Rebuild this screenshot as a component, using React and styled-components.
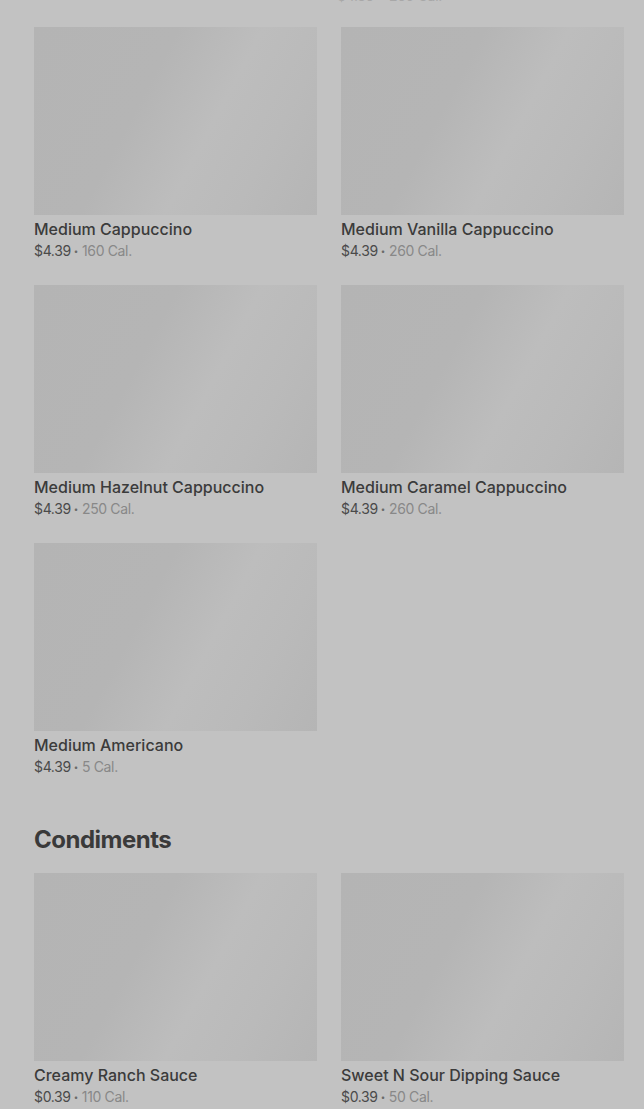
import React from 'react'
import styled, { createGlobalStyle } from 'styled-components'

const GlobalStyle = createGlobalStyle`
    html, body {
        margin: 0;
        padding: 0;
        background: #c2c2c2;
        font-family: Inter, "Noto Sans", sans-serif;
        overflow: hidden;
    }
`

const Page = styled.div`
    width: 644px;
    height: 1109px;
    overflow: hidden;
    background: #c2c2c2;
    padding-left: 34px;
    box-sizing: border-box;
    display: flow-root;
`

const Tail = styled.div`
    display: flow-root;
    height: 27px;
    padding-left: 303px;
`

const TailText = styled.div`
    margin-top: -14px;
    line-height: 20px;
    font-size: 14px;
    letter-spacing: -0.3px;
    color: #a8a8a8;
`

const Grid = styled.div`
    display: grid;
    grid-template-columns: repeat(2, 283px);
    column-gap: 24px;
    row-gap: 24px;
`

const Card = styled.div`
    display: flex;
    flex-direction: column;
`

const Photo = styled.div`
    height: 188px;
    background: linear-gradient(118deg, #b4b4b4 0%, #b5b5b5 38%, #bdbdbd 60%, #bababa 78%, #b5b5b5 100%);
`

const Title = styled.div`
    margin-top: 2px;
    line-height: 24px;
    font-size: 16px;
    font-weight: 500;
    color: #3b3b3b;
`

const Meta = styled.div`
    line-height: 20px;
    font-size: 14px;
    letter-spacing: -0.35px;
    color: #4a4a4a;
`

const Dot = styled.span`
    font-size: 8px;
    margin: 0 4px 0 3px;
    vertical-align: 2px;
    color: #6a6a6a;
`

const Cal = styled.span`
    color: #888888;
`

const Heading = styled.h2`
    margin: 47px 0 17px;
    line-height: 32px;
    font-size: 24px;
    font-weight: 700;
    color: #3a3a3a;
    letter-spacing: -0.5px;
`

const drinks = [
    { name: 'Medium Cappuccino', price: '$4.39', cal: '160 Cal.' },
    { name: 'Medium Vanilla Cappuccino', price: '$4.39', cal: '260 Cal.' },
    { name: 'Medium Hazelnut Cappuccino', price: '$4.39', cal: '250 Cal.' },
    { name: 'Medium Caramel Cappuccino', price: '$4.39', cal: '260 Cal.' },
    { name: 'Medium Americano', price: '$4.39', cal: '5 Cal.' },
]

const condiments = [
    { name: 'Creamy Ranch Sauce', price: '$0.39', cal: '110 Cal.' },
    { name: 'Sweet N Sour Dipping Sauce', price: '$0.39', cal: '50 Cal.' },
]

const Item = ({ item }) => (
    <Card>
        <Photo />
        <Title>{item.name}</Title>
        <Meta>
            {item.price}<Dot>•</Dot><Cal>{item.cal}</Cal>
        </Meta>
    </Card>
)

const App = () => {
    return (
        <Page>
            <GlobalStyle />
            <Tail>
                <TailText>$4.39 • 260 Cal.</TailText>
            </Tail>
            <Grid>
                {drinks.map(d => <Item key={d.name} item={d} />)}
            </Grid>
            <Heading>Condiments</Heading>
            <Grid>
                {condiments.map(d => <Item key={d.name} item={d} />)}
            </Grid>
        </Page>
    )
}

export default App
